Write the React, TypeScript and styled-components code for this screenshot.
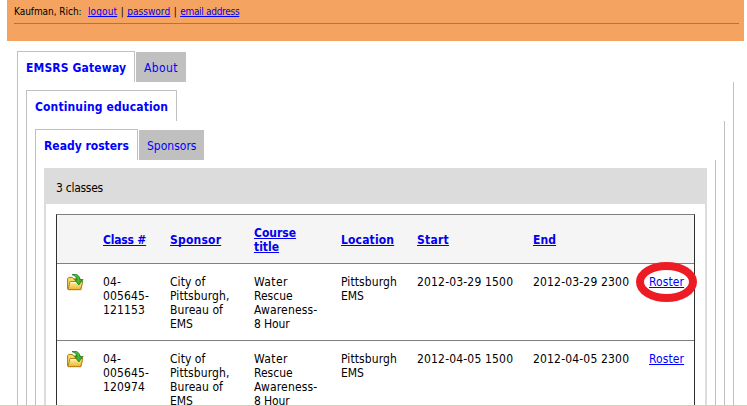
import React from 'react';
import styled, { createGlobalStyle } from 'styled-components';

const GlobalStyle = createGlobalStyle`
  html, body { margin: 0; padding: 0; background: #fff; overflow: hidden; }
  * { box-sizing: border-box; }
`;

const Page = styled.div`
  display: flex;
  flex-direction: column;
  height: 406px;
  overflow: hidden;
  background: #fff;
  color: #000;
  font: 12px/14px "DejaVu Sans Condensed", "DejaVu Sans", Tahoma, sans-serif;
  white-space: nowrap;
`;

const Viewport = styled.div`
  flex: 1;
  min-height: 0;
  overflow: hidden;
`;

const StatusEdge = styled.div`
  height: 1px;
  background: #d0d0c0;
`;

const Banner = styled.header`
  height: 41px;
  margin: 0 3px 0 7px;
  padding: 0 5px 0 7px;
  background: #f4a460;
`;

const UserBar = styled.nav`
  display: flex;
  height: 24px;
  padding-top: 5px;
  border-bottom: 1px solid #808080;
  font-size: 10px;
`;

const Track = styled.span<{ $track?: number }>`
  letter-spacing: ${({ $track = 0 }) => $track}px;
`;

const Link = styled.a<{ $track?: number }>`
  color: #0000ff;
  text-decoration: underline;
  text-underline-offset: 1px;
  text-decoration-thickness: 1px;
  text-decoration-skip-ink: none;
  letter-spacing: ${({ $track = 0 }) => $track}px;
`;

const SortLink = styled(Link)`
  color: #0000ee;
`;

const UserName = styled(Track)`
  width: 74px;
`;

const Divider = styled.span`
  width: 10px;
  text-align: center;
`;

const TabSet = styled.section`
  display: flex;
  flex-direction: column;
`;

const Outer = styled.main`
  margin: 10px 13px 0 17px;
`;

const TabRow = styled.div`
  display: flex;
  height: 31px;
`;

const Tab = styled.a<{ $active?: boolean; $width: number; $track?: number }>`
  width: ${({ $width }) => $width}px;
  height: ${({ $active }) => ($active ? 31 : 30)}px;
  margin-top: ${({ $active }) => ($active ? 0 : 1)}px;
  margin-left: ${({ $active }) => ($active ? 0 : 1)}px;
  padding: ${({ $active }) => ($active ? '9px 0 0 8px' : '9px 0 0 8px')};
  border: ${({ $active }) => ($active ? '1px solid #c0c0c0' : '0')};
  border-bottom: 0;
  background: ${({ $active }) => ($active ? '#fff' : '#c0c0c0')};
  color: #0000ff;
  font-weight: ${({ $active }) => ($active ? 'bold' : 'normal')};
  letter-spacing: ${({ $track = 0 }) => $track}px;
`;

const TabPanel = styled.div`
  padding: 8px 8px 0;
  border: solid #c0c0c0;
  border-width: 0 1px;
`;

const ClassPanel = styled.div`
  border: solid #dcdcdc;
  border-width: 0 2px;
`;

const PanelTitle = styled.h2`
  height: 36px;
  margin: 0;
  padding: 13px 0 0 10px;
  background: #dcdcdc;
  font-size: 12px;
  font-weight: normal;
  letter-spacing: -0.27px;
`;

const Table = styled.div`
  width: 639px;
  margin: 10px 0 0 10px;
  border: 1px solid #303030;
  border-top-color: #808080;
`;

const Row = styled.div<{ $head?: boolean }>`
  display: grid;
  grid-template-columns: 36px 67px 84px 87px 76px 116px 116px 55px;
  height: ${({ $head }) => ($head ? 49 : 77)}px;
  align-items: ${({ $head }) => ($head ? 'center' : 'start')};
  padding-top: ${({ $head }) => ($head ? 2 : 11)}px;
  border-bottom: 1px solid #808080;
  background: ${({ $head }) => ($head ? '#f5f5f5' : '#fff')};
  font-weight: ${({ $head }) => ($head ? 'bold' : 'normal')};
`;

const Cell = styled.div`
  display: flex;
  flex-direction: column;
  align-items: flex-start;
  padding-left: 10px;
`;

const RosterCell = styled(Cell)`
  position: relative;
`;

const Marker = styled.svg`
  position: absolute;
  left: -4px;
  top: -14px;
  width: 64px;
  height: 43px;
  pointer-events: none;
`;

const Icon = styled.svg`
  width: 17px;
  height: 17px;
  margin-top: -1px;
  display: block;
`;

const FolderIcon = () => (
  <Icon viewBox="0 0 17 17">
    <defs>
      <linearGradient id="folder" x1="0" y1="0" x2="0" y2="1">
        <stop offset="0" stopColor="#fff6a8" />
        <stop offset="1" stopColor="#eeb42c" />
      </linearGradient>
    </defs>
    <path d="M.6 14.8V4.6L1.8 3.4h3.6l1.3 1.5h6.6v2.6h2.3l-1.8 8.2H1.5z" fill="#f5d867" stroke="#a87411" />
    <path d="M3 7.5h12.7l-2 8H1z" fill="url(#folder)" stroke="#b9851b" />
    <path d="M3.8 8.6h6" stroke="#fffbd0" />
    <path d="M5 .6C9-.3 12.6 1 12.9 5.6h3.2L11.8 11 7.6 5.6h2.2C9.6 3.2 8.2 1.7 5 .6z" fill="#35ad28" stroke="#1e7b1b" strokeWidth=".8" />
    <path d="M8 1.2c2.6.4 3.7 2 3.7 5.1v2" fill="none" stroke="#5cc648" strokeWidth=".8" />
  </Icon>
);

type Word = [text: string, track: number];

const headings: Word[][] = [
  [['Class #', -0.2]],
  [['Sponsor', 0.2]],
  [['Course', 0], ['title', 0]],
  [['Location', 0.15]],
  [['Start', 0.25]],
  [['End', 0.1]],
];

const sponsor: Word[] = [['City of', 0.05], ['Pittsburgh,', 0.1], ['Bureau of', 0.07], ['EMS', -0.1]];
const course: Word[] = [['Water', 0.4], ['Rescue', 0], ['Awareness-', 0.15], ['8 Hour', -0.1]];
const location: Word[] = [['Pittsburgh', 0.1], ['EMS', -0.1]];

const classes = [
  { serial: '121153', day: '2012-03-29', marked: true },
  { serial: '120974', day: '2012-04-05', marked: false },
];

const Lines = ({ words }: { words: Word[] }) => (
  <Cell>
    {words.map(([text, track]) => (
      <Track key={text} $track={track}>{text}</Track>
    ))}
  </Cell>
);

export default function App() {
  return (
    <Page>
      <GlobalStyle />
      <Viewport>
        <Banner>
          <UserBar>
            <UserName $track={-0.05}>Kaufman, Rich:</UserName>
            <Link $track={0.12}>logout</Link>
            <Divider>|</Divider>
            <Link $track={0.04}>password</Link>
            <Divider>|</Divider>
            <Link $track={-0.3}>email address</Link>
          </UserBar>
        </Banner>
        <Outer>
          <TabSet>
            <TabRow>
              <Tab $active $width={118} $track={0.14}>EMSRS Gateway</Tab>
              <Tab $width={50} $track={0.4}>About</Tab>
            </TabRow>
            <TabPanel>
              <TabRow>
                <Tab $active $width={151} $track={0.13}>Continuing education</Tab>
              </TabRow>
              <TabPanel>
                <TabRow>
                  <Tab $active $width={103}>Ready rosters</Tab>
                  <Tab $width={65}>Sponsors</Tab>
                </TabRow>
                <TabPanel>
                  <ClassPanel>
                    <PanelTitle>3 classes</PanelTitle>
                    <Table>
                      <Row $head>
                        <Cell />
                        {headings.map((words) => (
                          <Cell key={words[0][0]}>
                            {words.map(([text, track]) => (
                              <SortLink key={text} $track={track}>{text}</SortLink>
                            ))}
                          </Cell>
                        ))}
                      </Row>
                      {classes.map(({ serial, day, marked }) => (
                        <Row key={serial}>
                          <Cell><FolderIcon /></Cell>
                          <Lines words={[['04-', 0.1], ['005645-', 0.12], [serial, 0.15]]} />
                          <Lines words={sponsor} />
                          <Lines words={course} />
                          <Lines words={location} />
                          <Lines words={[[`${day} 1500`, 0.17]]} />
                          <Lines words={[[`${day} 2300`, 0.17]]} />
                          <RosterCell>
                            <Link $track={0.1}>Roster</Link>
                            {marked && (
                              <Marker viewBox="0 0 64 43">
                                <ellipse cx="31.5" cy="21" rx="26.5" ry="16" fill="none" stroke="#ed1c24" strokeWidth="8" />
                              </Marker>
                            )}
                          </RosterCell>
                        </Row>
                      ))}
                    </Table>
                  </ClassPanel>
                </TabPanel>
              </TabPanel>
            </TabPanel>
          </TabSet>
        </Outer>
      </Viewport>
      <StatusEdge />
    </Page>
  );
}
